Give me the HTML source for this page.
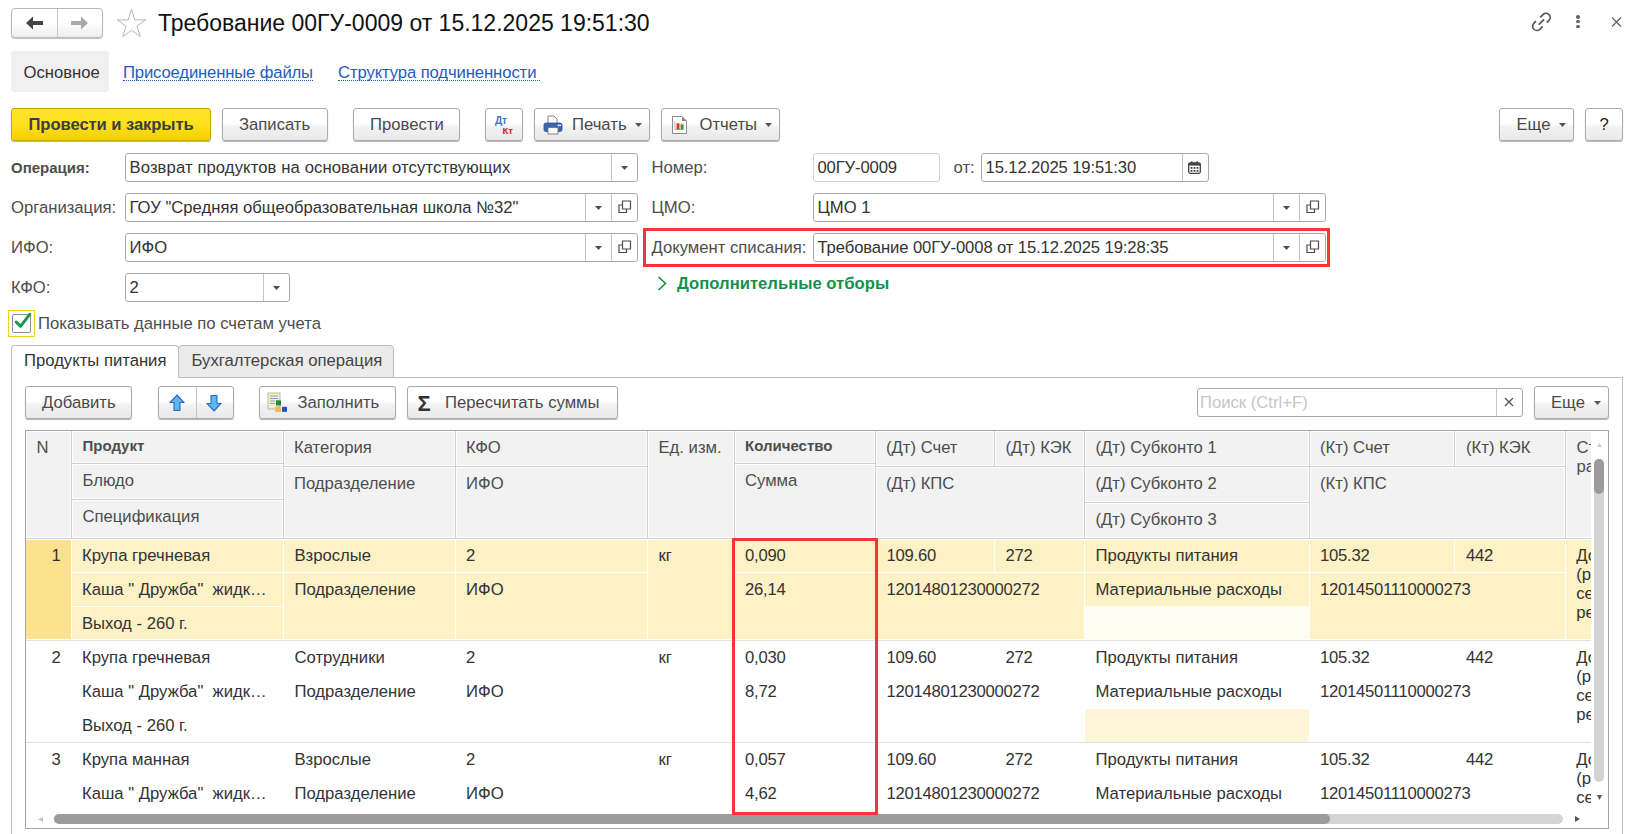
<!DOCTYPE html>
<html><head><meta charset="utf-8"><style>
html,body{margin:0;padding:0;background:#fff;}
body{width:1644px;height:834px;position:relative;overflow:hidden;font-family:"Liberation Sans",sans-serif;}
.a{position:absolute;}
.t{position:absolute;white-space:nowrap;font-family:"Liberation Sans",sans-serif;}
</style></head><body>
<div class="a" style="left:11px;top:8px;width:92px;height:30px;box-sizing:border-box;border:1px solid #b9b9b9;border-radius:4px;background:linear-gradient(#fff 0%,#fff 45%,#eeeeee 100%);box-shadow:0 1px 1px rgba(0,0,0,.25);"></div>
<div class="a" style="left:57px;top:9px;width:1px;height:28px;background:#c8c8c8;"></div>
<svg class="a" style="left:26px;top:16px" width="18" height="14" viewBox="0 0 18 14"><path d="M0 7 L7 0.5 L7 5 L17 5 L17 9 L7 9 L7 13.5 Z" fill="#444"/></svg>
<svg class="a" style="left:71px;top:16px" width="18" height="14" viewBox="0 0 18 14"><path d="M17 7 L10 0.5 L10 5 L0 5 L0 9 L10 9 L10 13.5 Z" fill="#a9a9a9"/></svg>
<svg class="a" style="left:116px;top:9px" width="31" height="29" viewBox="0 0 31 29"><path d="M15.50 0.50 L18.87 10.86 L29.77 10.86 L20.95 17.27 L24.32 27.64 L15.50 21.23 L6.68 27.64 L10.05 17.27 L1.23 10.86 L12.13 10.86 Z" fill="none" stroke="#b4b4b4" stroke-width="1"/></svg>
<div class="t " style="left:158px;top:9px;font-size:23px;line-height:28px;color:#111;">Требование 00ГУ-0009 от 15.12.2025 19:51:30</div>
<svg class="a" style="left:1530px;top:11px" width="23" height="22" viewBox="0 0 23 22"><g fill="none" stroke="#555" stroke-width="1.7"><path d="M10.1 6.4 L13.03 3.53 A4.2 4.2 0 0 1 18.97 9.47 L16.8 11.7"/><path d="M12.7 15.4 L9.77 18.27 A4.2 4.2 0 0 1 3.83 12.33 L6.0 10.1"/><path d="M8.7 13.7 L14.1 8.4"/></g></svg>
<div class="a" style="left:1576.2px;top:15.0px;width:3.6px;height:3.6px;border-radius:50%;background:#666;"></div>
<div class="a" style="left:1576.2px;top:19.7px;width:3.6px;height:3.6px;border-radius:50%;background:#666;"></div>
<div class="a" style="left:1576.2px;top:24.5px;width:3.6px;height:3.6px;border-radius:50%;background:#666;"></div>
<svg class="a" style="left:1611px;top:17px" width="11" height="10" viewBox="0 0 11 10"><path d="M1 0.5 L10 9.5 M10 0.5 L1 9.5" stroke="#666" stroke-width="1.4"/></svg>
<div class="a" style="left:11px;top:51px;width:98px;height:41px;background:#f0f0f0;border-radius:4px;"></div>
<div class="t " style="left:23.5px;top:63px;font-size:16.67px;line-height:20px;color:#333;">Основное</div>
<div class="t " style="left:123px;top:63px;font-size:16.67px;line-height:20px;color:#1f5bbf;letter-spacing:-0.15px;">Присоединенные файлы</div>
<div class="a" style="left:123px;top:80px;width:190px;height:0px;border-top:1px dotted #1f5bbf;"></div>
<div class="t " style="left:338px;top:63px;font-size:16.67px;line-height:20px;color:#1f5bbf;letter-spacing:-0.1px;">Структура подчиненности</div>
<div class="a" style="left:338px;top:80px;width:202px;height:0px;border-top:1px dotted #1f5bbf;"></div>
<div class="a" style="left:11px;top:108px;width:200px;height:33px;box-sizing:border-box;border:1px solid #c9a900;border-radius:3px;background:linear-gradient(#ffe22e 0%,#fee11a 50%,#f2d000 100%);box-shadow:0 1px 1px rgba(0,0,0,.3);"></div>
<div class="t " style="left:28.5px;top:115px;font-size:16.67px;line-height:20px;color:#3d3d45;font-weight:bold;letter-spacing:-0.1px;">Провести и закрыть</div>
<div class="a" style="left:222px;top:108px;width:106px;height:33px;box-sizing:border-box;border:1px solid #ababab;border-radius:3px;background:linear-gradient(#ffffff 0%,#ffffff 46%,#f2f2f2 58%,#e9e9e9 100%);box-shadow:0 1px 1px rgba(0,0,0,.3);"></div>
<div class="t " style="left:239px;top:115px;font-size:16.67px;line-height:20px;color:#4a4a4a;">Записать</div>
<div class="a" style="left:353px;top:108px;width:107px;height:33px;box-sizing:border-box;border:1px solid #ababab;border-radius:3px;background:linear-gradient(#ffffff 0%,#ffffff 46%,#f2f2f2 58%,#e9e9e9 100%);box-shadow:0 1px 1px rgba(0,0,0,.3);"></div>
<div class="t " style="left:370px;top:115px;font-size:16.67px;line-height:20px;color:#4a4a4a;">Провести</div>
<div class="a" style="left:485px;top:108px;width:38px;height:33px;box-sizing:border-box;border:1px solid #ababab;border-radius:3px;background:linear-gradient(#ffffff 0%,#ffffff 46%,#f2f2f2 58%,#e9e9e9 100%);box-shadow:0 1px 1px rgba(0,0,0,.3);"></div>
<div class="t " style="left:495px;top:115px;font-size:10px;line-height:12px;color:#3a74c2;font-weight:bold;">Дт</div>
<div class="t " style="left:502.5px;top:125px;font-size:9.5px;line-height:11px;color:#c4241a;font-weight:bold;">Кт</div>
<div class="a" style="left:534px;top:108px;width:116px;height:33px;box-sizing:border-box;border:1px solid #ababab;border-radius:3px;background:linear-gradient(#ffffff 0%,#ffffff 46%,#f2f2f2 58%,#e9e9e9 100%);box-shadow:0 1px 1px rgba(0,0,0,.3);"></div>
<svg class="a" style="left:543px;top:115px" width="20" height="20" viewBox="0 0 20 20"><path d="M5 1 H11 L14 4 V9 H5 Z" fill="#fff" stroke="#777" stroke-width="0.9"/><rect x="1" y="8" width="18" height="8.5" rx="2" fill="#3b66b0" stroke="#2c4f8e" stroke-width="0.8"/><rect x="5" y="12.5" width="10" height="6.5" fill="#fff" stroke="#777" stroke-width="0.9"/><circle cx="15.5" cy="10.3" r="0.9" fill="#fff"/><circle cx="17.2" cy="10.3" r="0.9" fill="#fff"/></svg>
<div class="t " style="left:572px;top:115px;font-size:16.67px;line-height:20px;color:#4a4a4a;">Печать</div>
<svg class="a" style="left:635px;top:123px" width="7" height="4"><path d="M0 0 H7 L3.5 4 Z" fill="#555"/></svg>
<div class="a" style="left:661px;top:108px;width:119px;height:33px;box-sizing:border-box;border:1px solid #ababab;border-radius:3px;background:linear-gradient(#ffffff 0%,#ffffff 46%,#f2f2f2 58%,#e9e9e9 100%);box-shadow:0 1px 1px rgba(0,0,0,.3);"></div>
<svg class="a" style="left:671px;top:115px" width="17" height="20" viewBox="0 0 17 20"><path d="M1.5 1.5 H11 L15.5 6 V18.5 H1.5 Z" fill="#fff" stroke="#8a8a8a" stroke-width="1"/><path d="M11 1.5 L15.5 6 H11 Z" fill="#8a8a8a"/><path d="M4 6.5 V14.5 H13" fill="none" stroke="#999" stroke-width="0.8"/><rect x="5.6" y="8.3" width="2.9" height="6" fill="#e8302a"/><rect x="9.6" y="9.3" width="2.9" height="5" fill="#2a9a3c"/><rect x="9.6" y="8.6" width="2.9" height="1.2" fill="#e0b020"/></svg>
<div class="t " style="left:699.5px;top:115px;font-size:16.67px;line-height:20px;color:#4a4a4a;">Отчеты</div>
<svg class="a" style="left:765px;top:123px" width="7" height="4"><path d="M0 0 H7 L3.5 4 Z" fill="#555"/></svg>
<div class="a" style="left:1499px;top:108px;width:75px;height:33px;box-sizing:border-box;border:1px solid #ababab;border-radius:3px;background:linear-gradient(#ffffff 0%,#ffffff 46%,#f2f2f2 58%,#e9e9e9 100%);box-shadow:0 1px 1px rgba(0,0,0,.3);"></div>
<div class="t " style="left:1516.5px;top:115px;font-size:16.67px;line-height:20px;color:#4a4a4a;">Еще</div>
<svg class="a" style="left:1559px;top:123px" width="7" height="4"><path d="M0 0 H7 L3.5 4 Z" fill="#555"/></svg>
<div class="a" style="left:1585px;top:108px;width:38px;height:33px;box-sizing:border-box;border:1px solid #ababab;border-radius:3px;background:linear-gradient(#ffffff 0%,#ffffff 46%,#f2f2f2 58%,#e9e9e9 100%);box-shadow:0 1px 1px rgba(0,0,0,.3);"></div>
<div class="t " style="left:1599.5px;top:115px;font-size:16.67px;line-height:20px;color:#222;">?</div>
<div class="t " style="left:11px;top:159px;font-size:15px;line-height:18px;color:#4d4d4d;font-weight:bold;">Операция:</div>
<div class="a" style="left:125px;top:153px;width:513px;height:29px;box-sizing:border-box;border:1px solid #a9a9a9;border-radius:3px;background:#fff;"></div>
<div class="a" style="left:611px;top:154px;width:1px;height:27px;background:#c6c6c6;"></div>
<svg class="a" style="left:620.5px;top:165.5px" width="7" height="4"><path d="M0 0 H7 L3.5 4 Z" fill="#4d4d4d"/></svg>
<div class="t " style="left:129.5px;top:158px;font-size:16.67px;line-height:20px;color:#333;letter-spacing:0.1px;">Возврат продуктов на основании отсутствующих</div>
<div class="t " style="left:11px;top:198px;font-size:16.67px;line-height:20px;color:#4d4d4d;">Организация:</div>
<div class="a" style="left:125px;top:193px;width:513px;height:29px;box-sizing:border-box;border:1px solid #a9a9a9;border-radius:3px;background:#fff;"></div>
<div class="a" style="left:611px;top:194px;width:1px;height:27px;background:#c6c6c6;"></div>
<svg class="a" style="left:617.5px;top:200px" width="14" height="14" viewBox="0 0 14 14"><path d="M4.5 1 H12.5 V9 H4.5 Z" fill="none" stroke="#4d4d4d" stroke-width="1.2"/><path d="M4.5 5 H1 V12.5 H8.5 V9" fill="none" stroke="#4d4d4d" stroke-width="1.2"/></svg>
<div class="a" style="left:585px;top:194px;width:1px;height:27px;background:#c6c6c6;"></div>
<svg class="a" style="left:594.5px;top:205.5px" width="7" height="4"><path d="M0 0 H7 L3.5 4 Z" fill="#4d4d4d"/></svg>
<div class="t " style="left:129.5px;top:198px;font-size:16.67px;line-height:20px;color:#333;">ГОУ "Средняя общеобразовательная школа №32"</div>
<div class="t " style="left:11px;top:238px;font-size:16.67px;line-height:20px;color:#4d4d4d;">ИФО:</div>
<div class="a" style="left:125px;top:233px;width:513px;height:29px;box-sizing:border-box;border:1px solid #a9a9a9;border-radius:3px;background:#fff;"></div>
<div class="a" style="left:611px;top:234px;width:1px;height:27px;background:#c6c6c6;"></div>
<svg class="a" style="left:617.5px;top:240px" width="14" height="14" viewBox="0 0 14 14"><path d="M4.5 1 H12.5 V9 H4.5 Z" fill="none" stroke="#4d4d4d" stroke-width="1.2"/><path d="M4.5 5 H1 V12.5 H8.5 V9" fill="none" stroke="#4d4d4d" stroke-width="1.2"/></svg>
<div class="a" style="left:585px;top:234px;width:1px;height:27px;background:#c6c6c6;"></div>
<svg class="a" style="left:594.5px;top:245.5px" width="7" height="4"><path d="M0 0 H7 L3.5 4 Z" fill="#4d4d4d"/></svg>
<div class="t " style="left:129.5px;top:238px;font-size:16.67px;line-height:20px;color:#333;">ИФО</div>
<div class="t " style="left:11px;top:278px;font-size:16.67px;line-height:20px;color:#4d4d4d;">КФО:</div>
<div class="a" style="left:125px;top:273px;width:165px;height:29px;box-sizing:border-box;border:1px solid #a9a9a9;border-radius:3px;background:#fff;"></div>
<div class="a" style="left:263px;top:274px;width:1px;height:27px;background:#c6c6c6;"></div>
<svg class="a" style="left:272.5px;top:285.5px" width="7" height="4"><path d="M0 0 H7 L3.5 4 Z" fill="#4d4d4d"/></svg>
<div class="t " style="left:129.5px;top:278px;font-size:16.67px;line-height:20px;color:#333;">2</div>
<div class="t " style="left:651.5px;top:158px;font-size:16.67px;line-height:20px;color:#4d4d4d;">Номер:</div>
<div class="a" style="left:813px;top:153px;width:127px;height:29px;box-sizing:border-box;border:1px solid #d2d2d2;border-radius:3px;background:#fff;"></div>
<div class="t " style="left:817.5px;top:158px;font-size:16.67px;line-height:20px;color:#333;letter-spacing:-0.15px;">00ГУ-0009</div>
<div class="t " style="left:953.5px;top:158px;font-size:16.67px;line-height:20px;color:#4d4d4d;">от:</div>
<div class="a" style="left:981px;top:153px;width:228px;height:29px;box-sizing:border-box;border:1px solid #a9a9a9;border-radius:3px;background:#fff;"></div>
<div class="a" style="left:1182px;top:154px;width:1px;height:27px;background:#c6c6c6;"></div>
<svg class="a" style="left:1188px;top:160.5px" width="13" height="13" viewBox="0 0 13 13"><rect x="0.7" y="2" width="11.6" height="10.3" rx="1.5" fill="none" stroke="#444" stroke-width="1.3"/><rect x="0.7" y="2" width="11.6" height="2.6" fill="#444"/><rect x="3" y="0.3" width="1.6" height="3" fill="#444"/><rect x="8.4" y="0.3" width="1.6" height="3" fill="#444"/><rect x="2.6" y="6" width="1.8" height="1.8" fill="#444"/><rect x="5.6" y="6" width="1.8" height="1.8" fill="#444"/><rect x="8.6" y="6" width="1.8" height="1.8" fill="#444"/><rect x="2.6" y="9" width="1.8" height="1.8" fill="#444"/><rect x="5.6" y="9" width="1.8" height="1.8" fill="#444"/><rect x="8.6" y="9" width="1.8" height="1.8" fill="#444"/></svg>
<div class="t " style="left:985.5px;top:158px;font-size:16.67px;line-height:20px;color:#333;letter-spacing:-0.12px;">15.12.2025 19:51:30</div>
<div class="t " style="left:651.5px;top:198px;font-size:16.67px;line-height:20px;color:#4d4d4d;">ЦМО:</div>
<div class="a" style="left:813px;top:193px;width:513px;height:29px;box-sizing:border-box;border:1px solid #a9a9a9;border-radius:3px;background:#fff;"></div>
<div class="a" style="left:1299px;top:194px;width:1px;height:27px;background:#c6c6c6;"></div>
<svg class="a" style="left:1305.5px;top:200px" width="14" height="14" viewBox="0 0 14 14"><path d="M4.5 1 H12.5 V9 H4.5 Z" fill="none" stroke="#4d4d4d" stroke-width="1.2"/><path d="M4.5 5 H1 V12.5 H8.5 V9" fill="none" stroke="#4d4d4d" stroke-width="1.2"/></svg>
<div class="a" style="left:1273px;top:194px;width:1px;height:27px;background:#c6c6c6;"></div>
<svg class="a" style="left:1282.5px;top:205.5px" width="7" height="4"><path d="M0 0 H7 L3.5 4 Z" fill="#4d4d4d"/></svg>
<div class="t " style="left:817.5px;top:198px;font-size:16.67px;line-height:20px;color:#333;">ЦМО 1</div>
<div class="t " style="left:651.5px;top:238px;font-size:16.67px;line-height:20px;color:#4d4d4d;">Документ списания:</div>
<div class="a" style="left:813px;top:233px;width:513px;height:29px;box-sizing:border-box;border:1px solid #a9a9a9;border-radius:3px;background:#fff;"></div>
<div class="a" style="left:1299px;top:234px;width:1px;height:27px;background:#c6c6c6;"></div>
<svg class="a" style="left:1305.5px;top:240px" width="14" height="14" viewBox="0 0 14 14"><path d="M4.5 1 H12.5 V9 H4.5 Z" fill="none" stroke="#4d4d4d" stroke-width="1.2"/><path d="M4.5 5 H1 V12.5 H8.5 V9" fill="none" stroke="#4d4d4d" stroke-width="1.2"/></svg>
<div class="a" style="left:1273px;top:234px;width:1px;height:27px;background:#c6c6c6;"></div>
<svg class="a" style="left:1282.5px;top:245.5px" width="7" height="4"><path d="M0 0 H7 L3.5 4 Z" fill="#4d4d4d"/></svg>
<div class="t " style="left:817.5px;top:238px;font-size:16.67px;line-height:20px;color:#333;letter-spacing:-0.12px;">Требование 00ГУ-0008 от 15.12.2025 19:28:35</div>
<div class="a" style="left:643px;top:228px;width:687px;height:39px;box-sizing:border-box;border:3px solid #fa3434;"></div>
<svg class="a" style="left:657px;top:276px" width="10" height="15" viewBox="0 0 10 15"><path d="M1.5 1 L8.5 7.5 L1.5 14" fill="none" stroke="#13914b" stroke-width="1.6"/></svg>
<div class="t " style="left:677px;top:274px;font-size:16.67px;line-height:20px;color:#13914b;font-weight:bold;">Дополнительные отборы</div>
<div class="a" style="left:8px;top:310px;width:27px;height:27px;box-sizing:border-box;border:1px solid #f2d21e;"></div>
<div class="a" style="left:12px;top:314px;width:19px;height:19px;box-sizing:border-box;border:1px solid #8e8e8e;border-radius:2px;background:#fff;"></div>
<svg class="a" style="left:14px;top:312px" width="18" height="17" viewBox="0 0 18 17"><path d="M2.2 10 L6.5 14.3 L15.7 2.3" fill="none" stroke="#139a4e" stroke-width="3" stroke-linecap="round" stroke-linejoin="round"/></svg>
<div class="t " style="left:38px;top:314px;font-size:16.67px;line-height:20px;color:#4d4d4d;">Показывать данные по счетам учета</div>
<div class="a" style="left:11px;top:377px;width:1612px;height:470px;box-sizing:border-box;border:1px solid #bdbdbd;background:#fff;"></div>
<div class="a" style="left:178px;top:345px;width:216px;height:33px;box-sizing:border-box;border:1px solid #bdbdbd;border-radius:4px 4px 0 0;background:#ebebeb;"></div>
<div class="t " style="left:191.5px;top:351px;font-size:16.67px;line-height:20px;color:#444;">Бухгалтерская операция</div>
<div class="a" style="left:11px;top:345px;width:168px;height:33px;box-sizing:border-box;border:1px solid #bdbdbd;border-bottom:none;border-radius:4px 4px 0 0;background:#fff;"></div>
<div class="a" style="left:12px;top:376px;width:166px;height:2px;background:#fff;"></div>
<div class="t " style="left:24px;top:351px;font-size:16.67px;line-height:20px;color:#333;">Продукты питания</div>
<div class="a" style="left:25px;top:386px;width:107px;height:33px;box-sizing:border-box;border:1px solid #ababab;border-radius:3px;background:linear-gradient(#ffffff 0%,#ffffff 46%,#f2f2f2 58%,#e9e9e9 100%);box-shadow:0 1px 1px rgba(0,0,0,.3);"></div>
<div class="t " style="left:42px;top:393px;font-size:16.67px;line-height:20px;color:#4a4a4a;">Добавить</div>
<div class="a" style="left:158px;top:386px;width:76px;height:33px;box-sizing:border-box;border:1px solid #ababab;border-radius:3px;background:linear-gradient(#ffffff 0%,#ffffff 46%,#f2f2f2 58%,#e9e9e9 100%);box-shadow:0 1px 1px rgba(0,0,0,.3);"></div>
<div class="a" style="left:196px;top:387px;width:1px;height:31px;background:#c4c4c4;"></div>
<svg class="a" style="left:169px;top:394px" width="16" height="18" viewBox="0 0 16 18"><path d="M8 1 L15 8.5 H11 V16.5 H5 V8.5 H1 Z" fill="#5cb6f2" stroke="#2a6dbf" stroke-width="1.1"/></svg>
<svg class="a" style="left:206px;top:394px" width="16" height="18" viewBox="0 0 16 18"><path d="M8 17 L15 9.5 H11 V1.5 H5 V9.5 H1 Z" fill="#5cb6f2" stroke="#2a6dbf" stroke-width="1.1"/></svg>
<div class="a" style="left:259px;top:386px;width:137px;height:33px;box-sizing:border-box;border:1px solid #ababab;border-radius:3px;background:linear-gradient(#ffffff 0%,#ffffff 46%,#f2f2f2 58%,#e9e9e9 100%);box-shadow:0 1px 1px rgba(0,0,0,.3);"></div>
<svg class="a" style="left:267px;top:392px" width="22" height="21" viewBox="0 0 22 21"><rect x="1" y="1" width="12" height="16" fill="#fbeec0" stroke="#aaa" stroke-width="0.8"/><path d="M3 4 H11 M3 6.5 H11 M3 9 H8 M3 11.5 H8" stroke="#8aa0c8" stroke-width="1"/><rect x="9" y="8.3" width="5" height="5.2" fill="#139445"/><rect x="8.2" y="14.3" width="5.8" height="5.7" fill="#f3b860"/><rect x="15" y="14.8" width="5" height="5" fill="#1f52c0"/></svg>
<div class="t " style="left:297.5px;top:393px;font-size:16.67px;line-height:20px;color:#4a4a4a;">Заполнить</div>
<div class="a" style="left:407px;top:386px;width:211px;height:33px;box-sizing:border-box;border:1px solid #ababab;border-radius:3px;background:linear-gradient(#ffffff 0%,#ffffff 46%,#f2f2f2 58%,#e9e9e9 100%);box-shadow:0 1px 1px rgba(0,0,0,.3);"></div>
<div class="t " style="left:417.5px;top:391px;font-size:22px;line-height:26px;color:#333;font-weight:bold;">&Sigma;</div>
<div class="t " style="left:445px;top:393px;font-size:16.67px;line-height:20px;color:#4a4a4a;">Пересчитать суммы</div>
<div class="a" style="left:1197px;top:388px;width:326px;height:29px;box-sizing:border-box;border:1px solid #a9a9a9;border-radius:3px;background:#fff;"></div>
<div class="a" style="left:1496px;top:389px;width:1px;height:27px;background:#c6c6c6;"></div>
<svg class="a" style="left:1504px;top:397px" width="10" height="10" viewBox="0 0 10 10"><path d="M1 1 L9 9 M9 1 L1 9" stroke="#555" stroke-width="1.3"/></svg>
<div class="t " style="left:1200px;top:393px;font-size:16.67px;line-height:20px;color:#c6c6c6;">Поиск (Ctrl+F)</div>
<div class="a" style="left:1534px;top:386px;width:75px;height:33px;box-sizing:border-box;border:1px solid #ababab;border-radius:3px;background:linear-gradient(#ffffff 0%,#ffffff 46%,#f2f2f2 58%,#e9e9e9 100%);box-shadow:0 1px 1px rgba(0,0,0,.3);"></div>
<div class="t " style="left:1551px;top:393px;font-size:16.67px;line-height:20px;color:#4a4a4a;">Еще</div>
<svg class="a" style="left:1594px;top:401px" width="7" height="4"><path d="M0 0 H7 L3.5 4 Z" fill="#555"/></svg>
<div class="a" style="left:25px;top:430px;width:1584px;height:399px;box-sizing:border-box;border:1px solid #a6a6a6;background:#fff;"></div>
<div class="a" style="left:26px;top:431px;width:1565px;height:108px;background:#d0d0d0;"></div>
<div class="a" style="left:26px;top:431px;width:45px;height:107px;background:#fff;"></div>
<div class="a" style="left:27px;top:432px;width:43px;height:105px;background:#f2f2f2;"></div>
<div class="a" style="left:72px;top:431px;width:211px;height:32px;background:#fff;"></div>
<div class="a" style="left:73px;top:432px;width:209px;height:30px;background:#f2f2f2;"></div>
<div class="a" style="left:72px;top:464px;width:211px;height:35px;background:#fff;"></div>
<div class="a" style="left:73px;top:465px;width:209px;height:33px;background:#f2f2f2;"></div>
<div class="a" style="left:72px;top:500px;width:211px;height:38px;background:#fff;"></div>
<div class="a" style="left:73px;top:501px;width:209px;height:36px;background:#f2f2f2;"></div>
<div class="a" style="left:284px;top:431px;width:171px;height:35px;background:#fff;"></div>
<div class="a" style="left:285px;top:432px;width:169px;height:33px;background:#f2f2f2;"></div>
<div class="a" style="left:284px;top:467px;width:171px;height:71px;background:#fff;"></div>
<div class="a" style="left:285px;top:468px;width:169px;height:69px;background:#f2f2f2;"></div>
<div class="a" style="left:456px;top:431px;width:191px;height:35px;background:#fff;"></div>
<div class="a" style="left:457px;top:432px;width:189px;height:33px;background:#f2f2f2;"></div>
<div class="a" style="left:456px;top:467px;width:191px;height:71px;background:#fff;"></div>
<div class="a" style="left:457px;top:468px;width:189px;height:69px;background:#f2f2f2;"></div>
<div class="a" style="left:648px;top:431px;width:86px;height:107px;background:#fff;"></div>
<div class="a" style="left:649px;top:432px;width:84px;height:105px;background:#f2f2f2;"></div>
<div class="a" style="left:735px;top:431px;width:140px;height:32px;background:#fff;"></div>
<div class="a" style="left:736px;top:432px;width:138px;height:30px;background:#f2f2f2;"></div>
<div class="a" style="left:735px;top:464px;width:140px;height:74px;background:#fff;"></div>
<div class="a" style="left:736px;top:465px;width:138px;height:72px;background:#f2f2f2;"></div>
<div class="a" style="left:876px;top:431px;width:118px;height:35px;background:#fff;"></div>
<div class="a" style="left:877px;top:432px;width:116px;height:33px;background:#f2f2f2;"></div>
<div class="a" style="left:995px;top:431px;width:89px;height:35px;background:#fff;"></div>
<div class="a" style="left:996px;top:432px;width:87px;height:33px;background:#f2f2f2;"></div>
<div class="a" style="left:876px;top:467px;width:208px;height:71px;background:#fff;"></div>
<div class="a" style="left:877px;top:468px;width:206px;height:69px;background:#f2f2f2;"></div>
<div class="a" style="left:1085px;top:431px;width:224px;height:35px;background:#fff;"></div>
<div class="a" style="left:1086px;top:432px;width:222px;height:33px;background:#f2f2f2;"></div>
<div class="a" style="left:1085px;top:467px;width:224px;height:35px;background:#fff;"></div>
<div class="a" style="left:1086px;top:468px;width:222px;height:33px;background:#f2f2f2;"></div>
<div class="a" style="left:1085px;top:503px;width:224px;height:35px;background:#fff;"></div>
<div class="a" style="left:1086px;top:504px;width:222px;height:33px;background:#f2f2f2;"></div>
<div class="a" style="left:1310px;top:431px;width:144px;height:35px;background:#fff;"></div>
<div class="a" style="left:1311px;top:432px;width:142px;height:33px;background:#f2f2f2;"></div>
<div class="a" style="left:1455px;top:431px;width:110px;height:35px;background:#fff;"></div>
<div class="a" style="left:1456px;top:432px;width:108px;height:33px;background:#f2f2f2;"></div>
<div class="a" style="left:1310px;top:467px;width:255px;height:71px;background:#fff;"></div>
<div class="a" style="left:1311px;top:468px;width:253px;height:69px;background:#f2f2f2;"></div>
<div class="a" style="left:1566px;top:431px;width:25px;height:107px;background:#fff;"></div>
<div class="a" style="left:1567px;top:432px;width:24px;height:105px;background:#f2f2f2;"></div>
<div class="a" style="left:26px;top:538px;width:1565px;height:1px;background:#d0d0d0;"></div>
<div class="t " style="left:36.5px;top:438px;font-size:16.67px;line-height:20px;color:#4d4d4d;">N</div>
<div class="t " style="left:82.5px;top:437px;font-size:15px;line-height:18px;color:#4d4d4d;font-weight:bold;">Продукт</div>
<div class="t " style="left:82.5px;top:471px;font-size:16.67px;line-height:20px;color:#4d4d4d;">Блюдо</div>
<div class="t " style="left:82.5px;top:507px;font-size:16.67px;line-height:20px;color:#4d4d4d;">Спецификация</div>
<div class="t " style="left:294px;top:438px;font-size:16.67px;line-height:20px;color:#4d4d4d;">Категория</div>
<div class="t " style="left:294px;top:474px;font-size:16.67px;line-height:20px;color:#4d4d4d;">Подразделение</div>
<div class="t " style="left:466px;top:438px;font-size:16.67px;line-height:20px;color:#4d4d4d;">КФО</div>
<div class="t " style="left:466px;top:474px;font-size:16.67px;line-height:20px;color:#4d4d4d;">ИФО</div>
<div class="t " style="left:658.5px;top:438px;font-size:16.67px;line-height:20px;color:#4d4d4d;">Ед. изм.</div>
<div class="t " style="left:745px;top:437px;font-size:15px;line-height:18px;color:#4d4d4d;font-weight:bold;">Количество</div>
<div class="t " style="left:745px;top:471px;font-size:16.67px;line-height:20px;color:#4d4d4d;">Сумма</div>
<div class="t " style="left:886px;top:438px;font-size:16.67px;line-height:20px;color:#4d4d4d;">(Дт) Счет</div>
<div class="t " style="left:1005.5px;top:438px;font-size:16.67px;line-height:20px;color:#4d4d4d;">(Дт) КЭК</div>
<div class="t " style="left:886px;top:474px;font-size:16.67px;line-height:20px;color:#4d4d4d;">(Дт) КПС</div>
<div class="t " style="left:1095.5px;top:438px;font-size:16.67px;line-height:20px;color:#4d4d4d;">(Дт) Субконто 1</div>
<div class="t " style="left:1095.5px;top:474px;font-size:16.67px;line-height:20px;color:#4d4d4d;">(Дт) Субконто 2</div>
<div class="t " style="left:1095.5px;top:510px;font-size:16.67px;line-height:20px;color:#4d4d4d;">(Дт) Субконто 3</div>
<div class="t " style="left:1320px;top:438px;font-size:16.67px;line-height:20px;color:#4d4d4d;">(Кт) Счет</div>
<div class="t " style="left:1466px;top:438px;font-size:16.67px;line-height:20px;color:#4d4d4d;">(Кт) КЭК</div>
<div class="t " style="left:1320px;top:474px;font-size:16.67px;line-height:20px;color:#4d4d4d;">(Кт) КПС</div>
<div class="a" style="left:1567px;top:432px;width:24px;height:105px;overflow:hidden"><div class="t " style="left:9.5px;top:6px;font-size:16.67px;line-height:20px;color:#4d4d4d;">Ст</div>
<div class="t " style="left:9.5px;top:25px;font-size:16.67px;line-height:20px;color:#4d4d4d;">ра</div>
</div>
<div class="a" style="left:26px;top:539px;width:1565px;height:274px;overflow:hidden">
<div class="a" style="left:0px;top:0px;width:1565px;height:100px;background:#fff;"></div>
<div class="a" style="left:0px;top:1px;width:45px;height:99px;background:#fde28e;"></div>
<div class="a" style="left:46px;top:1px;width:211px;height:32px;background:#fdf1c6;"></div>
<div class="a" style="left:46px;top:34px;width:211px;height:33px;background:#fdf1c6;"></div>
<div class="a" style="left:46px;top:68px;width:211px;height:32px;background:#fdf1c6;"></div>
<div class="a" style="left:258px;top:1px;width:171px;height:32px;background:#fdf1c6;"></div>
<div class="a" style="left:258px;top:34px;width:171px;height:66px;background:#fdf1c6;"></div>
<div class="a" style="left:430px;top:1px;width:191px;height:32px;background:#fdf1c6;"></div>
<div class="a" style="left:430px;top:34px;width:191px;height:66px;background:#fdf1c6;"></div>
<div class="a" style="left:622px;top:1px;width:86px;height:99px;background:#fdf1c6;"></div>
<div class="a" style="left:709px;top:1px;width:140px;height:32px;background:#fdf1c6;"></div>
<div class="a" style="left:709px;top:34px;width:140px;height:66px;background:#fdf1c6;"></div>
<div class="a" style="left:850px;top:1px;width:118px;height:32px;background:#fdf1c6;"></div>
<div class="a" style="left:969px;top:1px;width:89px;height:32px;background:#fdf1c6;"></div>
<div class="a" style="left:850px;top:34px;width:208px;height:66px;background:#fdf1c6;"></div>
<div class="a" style="left:1059px;top:1px;width:224px;height:32px;background:#fdf1c6;"></div>
<div class="a" style="left:1059px;top:34px;width:224px;height:33px;background:#fdf1c6;"></div>
<div class="a" style="left:1059px;top:67px;width:224px;height:33px;background:#fffcf0;"></div>
<div class="a" style="left:1284px;top:1px;width:144px;height:32px;background:#fdf1c6;"></div>
<div class="a" style="left:1429px;top:1px;width:110px;height:32px;background:#fdf1c6;"></div>
<div class="a" style="left:1284px;top:34px;width:255px;height:66px;background:#fdf1c6;"></div>
<div class="a" style="left:1540px;top:1px;width:25px;height:99px;background:#fdf1c6;"></div>
<div class="a" style="left:0px;top:101px;width:1565px;height:1px;background:#e2e2e2;"></div>
<div class="t" style="right:1530.2px;top:7px;font-size:16.67px;line-height:20px;color:#333;">1</div>
<div class="a" style="left:56px;top:1px;width:200px;height:100px;overflow:hidden"><div class="t " style="left:0px;top:6px;font-size:16.67px;line-height:20px;color:#333;">Крупа гречневая</div>
<div class="t " style="left:0px;top:40px;font-size:16.67px;line-height:20px;color:#333;">Каша " Дружба"&nbsp; жидк…</div>
<div class="t " style="left:0px;top:74px;font-size:16.67px;line-height:20px;color:#333;">Выход - 260 г.</div>
</div>
<div class="t " style="left:268.5px;top:7px;font-size:16.67px;line-height:20px;color:#333;">Взрослые</div>
<div class="t " style="left:268.5px;top:41px;font-size:16.67px;line-height:20px;color:#333;">Подразделение</div>
<div class="t " style="left:440px;top:7px;font-size:16.67px;line-height:20px;color:#333;">2</div>
<div class="t " style="left:440px;top:41px;font-size:16.67px;line-height:20px;color:#333;">ИФО</div>
<div class="t " style="left:632.5px;top:7px;font-size:16.67px;line-height:20px;color:#333;">кг</div>
<div class="t " style="left:719px;top:7px;font-size:16.67px;line-height:20px;color:#333;letter-spacing:-0.25px;">0,090</div>
<div class="t " style="left:719px;top:41px;font-size:16.67px;line-height:20px;color:#333;letter-spacing:-0.25px;">26,14</div>
<div class="t " style="left:860.5px;top:7px;font-size:16.67px;line-height:20px;color:#333;letter-spacing:-0.25px;">109.60</div>
<div class="t " style="left:979.5px;top:7px;font-size:16.67px;line-height:20px;color:#333;letter-spacing:-0.25px;">272</div>
<div class="t " style="left:860.5px;top:41px;font-size:16.67px;line-height:20px;color:#333;letter-spacing:-0.27px;">12014801230000272</div>
<div class="t " style="left:1069.5px;top:7px;font-size:16.67px;line-height:20px;color:#333;">Продукты питания</div>
<div class="t " style="left:1069.5px;top:41px;font-size:16.67px;line-height:20px;color:#333;">Материальные расходы</div>
<div class="t " style="left:1294px;top:7px;font-size:16.67px;line-height:20px;color:#333;letter-spacing:-0.25px;">105.32</div>
<div class="t " style="left:1440px;top:7px;font-size:16.67px;line-height:20px;color:#333;letter-spacing:-0.25px;">442</div>
<div class="t " style="left:1294px;top:41px;font-size:16.67px;line-height:20px;color:#333;letter-spacing:-0.27px;">12014501110000273</div>
<div class="a" style="left:1540px;top:1px;width:25px;height:100px;overflow:hidden"><div class="t " style="left:10.2px;top:6px;font-size:16.67px;line-height:20px;color:#333;">До</div>
<div class="t " style="left:10.2px;top:25px;font-size:16.67px;line-height:20px;color:#333;">(р</div>
<div class="t " style="left:10.2px;top:44px;font-size:16.67px;line-height:20px;color:#333;">се</div>
<div class="t " style="left:10.2px;top:63px;font-size:16.67px;line-height:20px;color:#333;">ре</div>
</div>
<div class="a" style="left:1059px;top:170px;width:224px;height:33px;background:#fef6d6;"></div>
<div class="a" style="left:0px;top:203px;width:1565px;height:1px;background:#e2e2e2;"></div>
<div class="t" style="right:1530.2px;top:109px;font-size:16.67px;line-height:20px;color:#333;">2</div>
<div class="a" style="left:56px;top:103px;width:200px;height:100px;overflow:hidden"><div class="t " style="left:0px;top:6px;font-size:16.67px;line-height:20px;color:#333;">Крупа гречневая</div>
<div class="t " style="left:0px;top:40px;font-size:16.67px;line-height:20px;color:#333;">Каша " Дружба"&nbsp; жидк…</div>
<div class="t " style="left:0px;top:74px;font-size:16.67px;line-height:20px;color:#333;">Выход - 260 г.</div>
</div>
<div class="t " style="left:268.5px;top:109px;font-size:16.67px;line-height:20px;color:#333;">Сотрудники</div>
<div class="t " style="left:268.5px;top:143px;font-size:16.67px;line-height:20px;color:#333;">Подразделение</div>
<div class="t " style="left:440px;top:109px;font-size:16.67px;line-height:20px;color:#333;">2</div>
<div class="t " style="left:440px;top:143px;font-size:16.67px;line-height:20px;color:#333;">ИФО</div>
<div class="t " style="left:632.5px;top:109px;font-size:16.67px;line-height:20px;color:#333;">кг</div>
<div class="t " style="left:719px;top:109px;font-size:16.67px;line-height:20px;color:#333;letter-spacing:-0.25px;">0,030</div>
<div class="t " style="left:719px;top:143px;font-size:16.67px;line-height:20px;color:#333;letter-spacing:-0.25px;">8,72</div>
<div class="t " style="left:860.5px;top:109px;font-size:16.67px;line-height:20px;color:#333;letter-spacing:-0.25px;">109.60</div>
<div class="t " style="left:979.5px;top:109px;font-size:16.67px;line-height:20px;color:#333;letter-spacing:-0.25px;">272</div>
<div class="t " style="left:860.5px;top:143px;font-size:16.67px;line-height:20px;color:#333;letter-spacing:-0.27px;">12014801230000272</div>
<div class="t " style="left:1069.5px;top:109px;font-size:16.67px;line-height:20px;color:#333;">Продукты питания</div>
<div class="t " style="left:1069.5px;top:143px;font-size:16.67px;line-height:20px;color:#333;">Материальные расходы</div>
<div class="t " style="left:1294px;top:109px;font-size:16.67px;line-height:20px;color:#333;letter-spacing:-0.25px;">105.32</div>
<div class="t " style="left:1440px;top:109px;font-size:16.67px;line-height:20px;color:#333;letter-spacing:-0.25px;">442</div>
<div class="t " style="left:1294px;top:143px;font-size:16.67px;line-height:20px;color:#333;letter-spacing:-0.27px;">12014501110000273</div>
<div class="a" style="left:1540px;top:103px;width:25px;height:100px;overflow:hidden"><div class="t " style="left:10.2px;top:6px;font-size:16.67px;line-height:20px;color:#333;">До</div>
<div class="t " style="left:10.2px;top:25px;font-size:16.67px;line-height:20px;color:#333;">(р</div>
<div class="t " style="left:10.2px;top:44px;font-size:16.67px;line-height:20px;color:#333;">се</div>
<div class="t " style="left:10.2px;top:63px;font-size:16.67px;line-height:20px;color:#333;">ре</div>
</div>
<div class="a" style="left:0px;top:305px;width:1565px;height:1px;background:#e2e2e2;"></div>
<div class="t" style="right:1530.2px;top:211px;font-size:16.67px;line-height:20px;color:#333;">3</div>
<div class="a" style="left:56px;top:205px;width:200px;height:100px;overflow:hidden"><div class="t " style="left:0px;top:6px;font-size:16.67px;line-height:20px;color:#333;">Крупа манная</div>
<div class="t " style="left:0px;top:40px;font-size:16.67px;line-height:20px;color:#333;">Каша " Дружба"&nbsp; жидк…</div>
<div class="t " style="left:0px;top:74px;font-size:16.67px;line-height:20px;color:#333;">Выход - 260 г.</div>
</div>
<div class="t " style="left:268.5px;top:211px;font-size:16.67px;line-height:20px;color:#333;">Взрослые</div>
<div class="t " style="left:268.5px;top:245px;font-size:16.67px;line-height:20px;color:#333;">Подразделение</div>
<div class="t " style="left:440px;top:211px;font-size:16.67px;line-height:20px;color:#333;">2</div>
<div class="t " style="left:440px;top:245px;font-size:16.67px;line-height:20px;color:#333;">ИФО</div>
<div class="t " style="left:632.5px;top:211px;font-size:16.67px;line-height:20px;color:#333;">кг</div>
<div class="t " style="left:719px;top:211px;font-size:16.67px;line-height:20px;color:#333;letter-spacing:-0.25px;">0,057</div>
<div class="t " style="left:719px;top:245px;font-size:16.67px;line-height:20px;color:#333;letter-spacing:-0.25px;">4,62</div>
<div class="t " style="left:860.5px;top:211px;font-size:16.67px;line-height:20px;color:#333;letter-spacing:-0.25px;">109.60</div>
<div class="t " style="left:979.5px;top:211px;font-size:16.67px;line-height:20px;color:#333;letter-spacing:-0.25px;">272</div>
<div class="t " style="left:860.5px;top:245px;font-size:16.67px;line-height:20px;color:#333;letter-spacing:-0.27px;">12014801230000272</div>
<div class="t " style="left:1069.5px;top:211px;font-size:16.67px;line-height:20px;color:#333;">Продукты питания</div>
<div class="t " style="left:1069.5px;top:245px;font-size:16.67px;line-height:20px;color:#333;">Материальные расходы</div>
<div class="t " style="left:1294px;top:211px;font-size:16.67px;line-height:20px;color:#333;letter-spacing:-0.25px;">105.32</div>
<div class="t " style="left:1440px;top:211px;font-size:16.67px;line-height:20px;color:#333;letter-spacing:-0.25px;">442</div>
<div class="t " style="left:1294px;top:245px;font-size:16.67px;line-height:20px;color:#333;letter-spacing:-0.27px;">12014501110000273</div>
<div class="a" style="left:1540px;top:205px;width:25px;height:100px;overflow:hidden"><div class="t " style="left:10.2px;top:6px;font-size:16.67px;line-height:20px;color:#333;">До</div>
<div class="t " style="left:10.2px;top:25px;font-size:16.67px;line-height:20px;color:#333;">(р</div>
<div class="t " style="left:10.2px;top:44px;font-size:16.67px;line-height:20px;color:#333;">се</div>
<div class="t " style="left:10.2px;top:63px;font-size:16.67px;line-height:20px;color:#333;">ре</div>
</div>
</div>
<div class="a" style="left:26px;top:813px;width:1565px;height:15px;background:#fff;"></div>
<div class="a" style="left:54px;top:814px;width:1509px;height:10px;background:#d4d4d4;border-radius:5px;"></div>
<div class="a" style="left:54px;top:814px;width:1276px;height:10px;background:#9b9b9b;border-radius:5px;"></div>
<svg class="a" style="left:37.5px;top:817px" width="5" height="5"><path d="M5 0 V5 L0 2.5 Z" fill="#c8c0c4"/></svg>
<svg class="a" style="left:1575px;top:816px" width="5" height="6"><path d="M0 0 V6 L5 3 Z" fill="#555"/></svg>
<div class="a" style="left:1591px;top:431px;width:17px;height:382px;background:#fff;"></div>
<svg class="a" style="left:1597px;top:442.5px" width="5" height="4.5"><path d="M0 4.5 H5 L2.5 0 Z" fill="#cfc6ca"/></svg>
<div class="a" style="left:1594px;top:459px;width:10px;height:323px;background:#d4d4d4;border-radius:5px;"></div>
<div class="a" style="left:1594px;top:459px;width:10px;height:35px;background:#9b9b9b;border-radius:5px;"></div>
<svg class="a" style="left:1597px;top:795px" width="5" height="5"><path d="M0 0 H5 L2.5 5 Z" fill="#555"/></svg>
<div class="a" style="left:732px;top:538px;width:146px;height:277px;box-sizing:border-box;border:3px solid #fa3434;"></div>
</body></html>
